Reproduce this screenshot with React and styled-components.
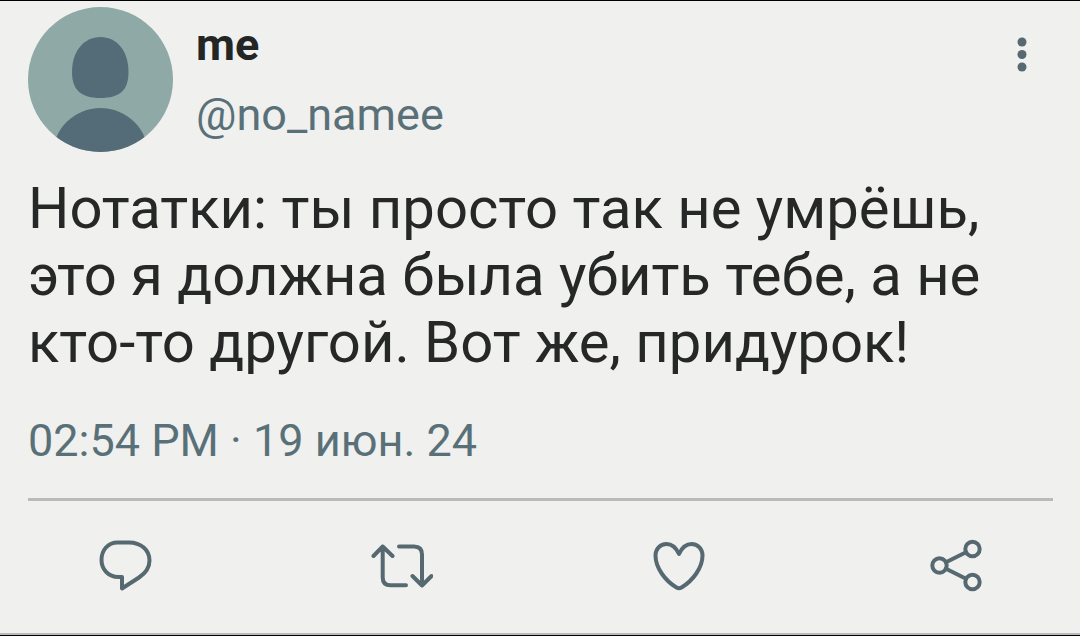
import React from 'react';
import styled, { createGlobalStyle } from 'styled-components';

const GlobalStyle = createGlobalStyle`
    * {
        box-sizing: border-box;
    }
    body {
        margin: 0;
        background: #f0f0ef;
        font-family: Roboto, "Liberation Sans", sans-serif;
    }
`;

const Post = styled.article`
    padding: 6px 27px 38px 28px;
    border-top: 1px solid #000;
    border-bottom: 1px solid #000;
    background: #f0f0ef;
    box-shadow: inset 0 -2px 0 #b9bbba;
`;

const Header = styled.header`
    display: flex;
    align-items: center;
    gap: 23px;
`;

const Avatar = styled.svg`
    flex: none;
    width: 145px;
    height: 145px;
    border-radius: 50%;
    background: #8fa9a6;
    fill: #546c77;
`;

const Identity = styled.div`
    flex: 1;
    min-width: 0;
    font-size: 45px;
    line-height: 70px;
`;

const Name = styled.div`
    color: #242626;
    font-weight: 700;
`;

const Handle = styled.a`
    display: block;
    color: #5a7078;
    text-decoration: none;
`;

const IconButton = styled.button`
    display: block;
    flex: none;
    width: 62px;
    height: 62px;
    padding: 0;
    border: 0;
    background: none;
    color: #566970;
    cursor: pointer;

    svg {
        display: block;
        width: 100%;
        height: 100%;
        fill: none;
        stroke: currentColor;
        stroke-width: 4;
        stroke-linecap: round;
        stroke-linejoin: round;
    }
`;

const MenuButton = styled(IconButton)`
    align-self: flex-start;
    margin-top: 17px;

    svg {
        fill: currentColor;
        stroke: none;
    }
`;

const Message = styled.p`
    margin: 23px 0 39px;
    color: #262828;
    font-size: 58px;
    line-height: 67px;
`;

const Time = styled.time`
    display: block;
    padding-bottom: 31px;
    border-bottom: 3px solid #b9bbba;
    color: #5a7078;
    font-size: 45px;
    line-height: 52px;
`;

const Actions = styled.footer`
    display: flex;
    justify-content: space-between;
    padding: 34px 66px 0;
`;

const actions = [
    {
        label: 'Ответить',
        icon: <path d="M23.5 7.5H35C47 7.5 55.5 15 55.5 25.5C55.5 33 51 38.5 45 42.5L28 53.5V42H24.5C14 42 7.5 34 7.5 25C7.5 15 14 7.5 23.5 7.5Z" />,
    },
    {
        label: 'Ретвитнуть',
        icon: <path d="M35 50.3H19.5Q11.7 50.3 11.7 42.5V11.5M2.5 21L11.7 11.5L21.5 21M28 11.5H43Q51 11.5 51 19.5V50.5M41.5 41L51 50.5L60.5 41" />,
    },
    {
        label: 'Нравится',
        icon: <path d="M31 19C28 12.5 23.5 9 18.5 9C12 9 7.5 14 7.5 20.5C7.5 33 17.5 46 28.5 52.5Q31 54 33.5 52.5C44.5 46 54.5 33 54.5 20.5C54.5 14 50 9 43.5 9C38.5 9 34 12.5 31 19Z" />,
    },
    {
        label: 'Поделиться',
        icon: (
            <>
                <circle cx="14.5" cy="30.5" r="7.2" />
                <circle cx="47.5" cy="14" r="7.2" />
                <circle cx="47.5" cy="47" r="7.2" />
                <path d="M21 27.3L41 17.3M21 33.7L41 43.7" />
            </>
        ),
    },
];

const App = () => {
    return (
        <>
            <GlobalStyle />
            <Post>
                <Header>
                    <Avatar viewBox="0 0 145 145" aria-hidden="true">
                        <path d="M72.5 30C89 30 100.5 44 100.5 65C100.5 83 92 91 72.5 91C53 91 44 83 44 65C44 44 56 30 72.5 30Z" />
                        <circle cx="72.5" cy="149" r="48" />
                    </Avatar>
                    <Identity>
                        <Name>me</Name>
                        <Handle href="#no_namee">@no_namee</Handle>
                    </Identity>
                    <MenuButton type="button" aria-label="Ещё">
                        <svg viewBox="0 0 62 62">
                            <circle cx="31" cy="18" r="4.5" />
                            <circle cx="31" cy="30.5" r="4.5" />
                            <circle cx="31" cy="43" r="4.5" />
                        </svg>
                    </MenuButton>
                </Header>
                <Message>
                    Нотатки: ты просто так не умрёшь, это я должна была убить тебе, а не кто-то другой. Вот же, придурок!
                </Message>
                <Time dateTime="2024-06-19T14:54">02:54 PM · 19 июн. 24</Time>
                <Actions>
                    {actions.map(({ label, icon }) => (
                        <IconButton key={label} type="button" aria-label={label}>
                            <svg viewBox="0 0 62 62">{icon}</svg>
                        </IconButton>
                    ))}
                </Actions>
            </Post>
        </>
    );
};

export default App;
